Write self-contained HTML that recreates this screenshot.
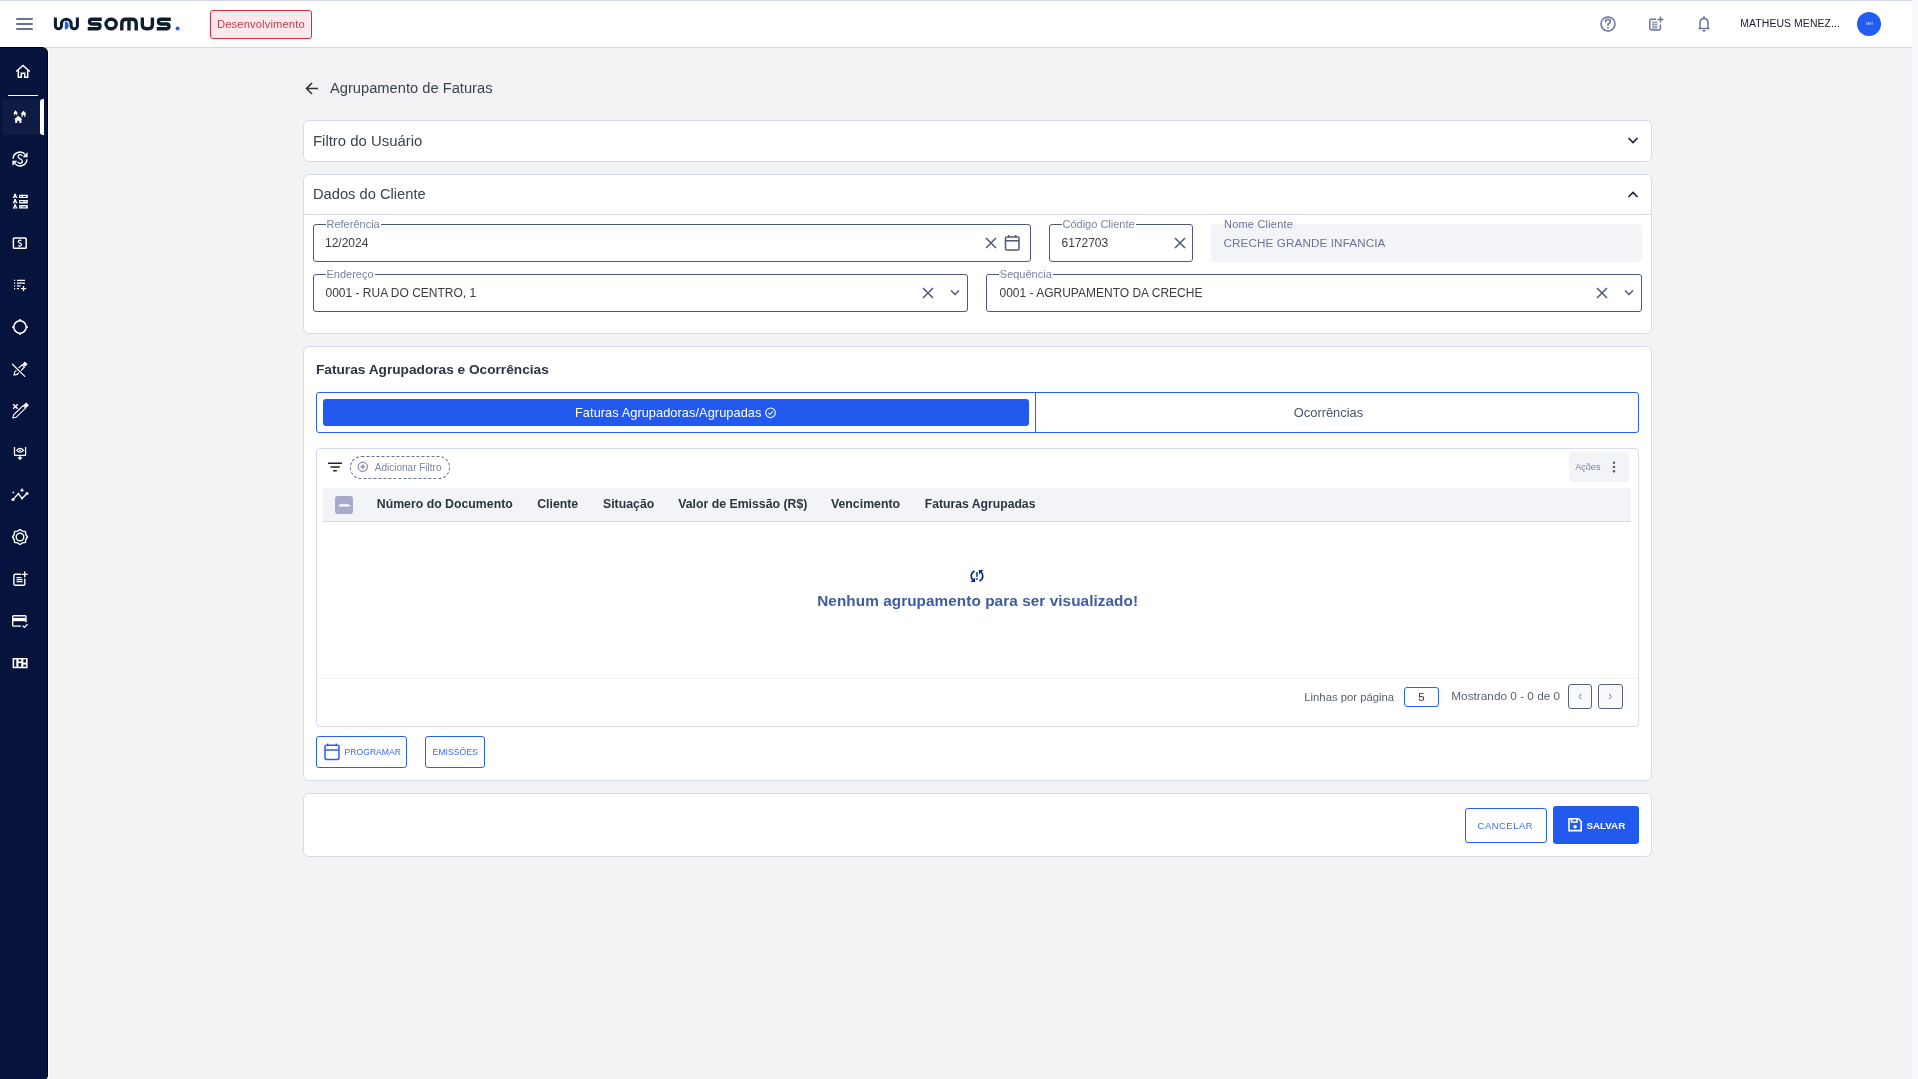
<!DOCTYPE html>
<html><head><meta charset="utf-8">
<style>
*{box-sizing:border-box;margin:0;padding:0}
html,body{width:1918px;height:1079px;overflow:hidden}
body{will-change:transform;background:#f3f3f6;font-family:"Liberation Sans",sans-serif;position:relative;color:#3a4350}
.abs{position:absolute}
svg{position:absolute;overflow:visible}
#hdr{position:absolute;left:0;top:0;width:1912px;height:48px;background:#fff;border-top:1px solid #d3d7ea;border-bottom:1px solid #d3d7ea}
#strip{position:absolute;right:0;top:0;width:6px;height:1079px;background:#f7f9fd}
#side{position:absolute;left:0;top:47px;width:48px;height:1034px;background:#06133d;border-top:1px solid #000;border-right:1px solid #000;border-top-right-radius:6px;border-bottom-right-radius:6px}
#sidegap{position:absolute;left:48px;top:48px;width:1px;height:1031px;background:#fff}
.card{position:absolute;left:303px;width:1349px;background:#fff;border:1px solid #d5daf0;border-radius:6px}
.txt{position:absolute;white-space:nowrap;line-height:1}
.inp{position:absolute;border:1px solid #4f5878;border-radius:3px;background:#fff}
.lbl{position:absolute;top:-7px;font-size:11px;color:#7a82a0;background:#fff;padding:0 1px;line-height:12px;white-space:nowrap}
.val{position:absolute;left:12px;top:12px;font-size:12px;color:#3b3b40;line-height:14px;white-space:nowrap}
</style></head>
<body>
<div id="hdr"></div>
<div id="strip"></div>
<div id="side"></div>
<div id="sidegap"></div>
<!-- hamburger -->
<div class="abs" style="left:16px;top:18px;width:17px;height:2px;background:#687196;border-radius:1px"></div>
<div class="abs" style="left:16px;top:23px;width:17px;height:2px;background:#687196;border-radius:1px"></div>
<div class="abs" style="left:16px;top:28px;width:17px;height:2px;background:#687196;border-radius:1px"></div>
<!-- logo -->
<svg style="left:0;top:0" width="1" height="1">
  <path d="M55.4 17.6V25.7A3.05 3.05 0 0 0 61.5 25.7V24A4.8 4.8 0 0 1 71.1 24V25.65A3.15 3.15 0 0 0 77.4 25.65V17.4" fill="none" stroke="#0f1d33" stroke-width="3.1"/>
  <path d="M64.8 22.6Q64.8 21.4 66.1 21.6Q68.6 22.2 68.6 25.5Q68.6 29 65.6 29.6Q64.8 29.7 64.8 28.8Z" fill="#225cf5"/>
  <g fill="none" stroke="#0f1d33" stroke-width="3.4">
    <path d="M101.8 19.3H91.6Q89.5 19.3 89.5 21.6Q89.5 24 91.6 24H97.9Q100 24 100 26.3Q100 28.7 97.9 28.7H87.7"/>
    <rect x="106" y="19.3" width="10.2" height="9.4" rx="4.7"/>
    <path d="M121.8 30.5V23.5Q121.8 19.3 126 19.3H132Q136.2 19.3 136.2 23.5V30.5M129 19.5V30.5"/>
    <path d="M142.3 17.5V24.5Q142.3 28.7 146.5 28.7H148.2Q152.4 28.7 152.4 24.5V17.5"/>
    <path d="M170.8 19.3H160.6Q158.5 19.3 158.5 21.6Q158.5 24 160.6 24H166.9Q169 24 169 26.3Q169 28.7 166.9 28.7H156.7"/>
  </g>
  <circle cx="177.6" cy="28.5" r="2" fill="#2563eb"/>
</svg>
<!-- badge -->
<div class="abs" style="left:210px;top:10px;width:102px;height:29px;border:1px solid #d0303c;border-radius:3px;background:#fde9eb"></div>
<div class="txt" style="left:217px;top:19px;font-size:11.2px;color:#c23a4b;letter-spacing:0.13px">Desenvolvimento</div>
<!-- header right icons -->
<svg style="left:0;top:0" width="1" height="1">
  <g fill="none" stroke="#6b7399" stroke-width="1.5">
    <circle cx="1608" cy="24" r="7"/>
    <path d="M1605.5 21.8Q1605.5 19.3 1608 19.3Q1610.5 19.3 1610.5 21.6Q1610.5 23.2 1608 24.3V25.6" stroke-linecap="round"/>
  </g>
  <circle cx="1608" cy="27.8" r="0.9" fill="#6b7399"/>
  <g fill="none" stroke="#6b7399" stroke-width="1.5">
    <path d="M1656 19.3H1651.2Q1649.8 19.3 1649.8 20.7V28.6Q1649.8 30 1651.2 30H1659Q1660.4 30 1660.4 28.6V24.5"/>
    <path d="M1660.5 16.5V22.5M1657.5 19.5H1663.5"/>
    <path d="M1652 22.2H1657.5M1652 24.2H1657.5M1652 26.2H1657.5M1652 28H1657.5" stroke-width="1"/>
  </g>
  <g fill="none" stroke="#6b7399" stroke-width="1.5">
    <path d="M1698.5 28.5H1709.5M1700 28.5V23Q1700 18.5 1704 18.5Q1708 18.5 1708 23V28.5" stroke-linejoin="round"/>
  </g>
  <circle cx="1704" cy="17.3" r="1" fill="#6b7399"/>
  <path d="M1702.5 30.5Q1704 32.5 1705.5 30.5Z" fill="#6b7399" stroke="#6b7399" stroke-width="0.8"/>
</svg>
<div class="txt" style="left:1740.3px;top:19.3px;font-size:10.45px;color:#1a1d2b;letter-spacing:0.08px">MATHEUS MENEZ...</div>
<div class="abs" style="left:1857px;top:12px;width:24px;height:24px;border-radius:50%;background:#225cf0"></div>
<div class="txt" style="left:1865.8px;top:21.8px;font-size:4.3px;color:#c8d4ff;letter-spacing:-0.1px">MM</div>
<!-- sidebar items -->
<div class="abs" style="left:8px;top:95px;width:30px;height:1px;background:#fff"></div>
<div class="abs" style="left:2px;top:99px;width:38px;height:36px;background:#0f1b45"></div>
<div class="abs" style="left:40px;top:99px;width:4px;height:36px;background:#fff;border-radius:3px 0 0 3px"></div>
<svg style="left:0;top:0" width="1" height="1">
  <g fill="none" stroke="#fff" stroke-width="1.5" stroke-linejoin="miter">
    <!-- home -->
    <path d="M16.2 71.5L23 65.5L29.8 71.5M18.3 70V77.3H21.3V73.2H24.7V77.3H27.7V70"/>
  </g>
  <!-- houses -->
  <g fill="#fff">
    <path d="M14.2 119.3L18.3 115.7L22.4 119.3H21.4V123H19.4V120.8H17.2V123H15.2V119.3Z"/>
    <path d="M20.6 113.8L23.5 110.8L26.4 113.8H25.6V116.8H24.3V115H22.7V116.8H21.4V113.8Z"/>
    <path d="M13.3 113.2L15.6 110.3L17.9 113.2H17.2V115.3H16.3V114H14.9V115.3H14V113.2Z"/>
  </g>
  <g fill="none" stroke="#fff" stroke-width="1.4">
    <!-- sync dollar -->
    <path d="M13.1 158.8A6.9 6.9 0 0 1 25.3 154.6"/>
    <path d="M26.9 159.2A6.9 6.9 0 0 1 14.7 163.4"/>
    <path d="M22.3 156Q21.7 154.6 20.1 154.6Q18.1 154.6 18.1 156.5Q18.1 158.2 20.1 158.8Q22.4 159.5 22.4 161.3Q22.4 163.3 20.1 163.3Q18.3 163.3 17.6 161.8" stroke-width="1.25"/>
  </g>
  <g fill="#fff">
    <path d="M27.6 152.2V157.3H22.5Z"/>
    <path d="M12.4 165.8V160.7H17.5Z"/>
  </g>
  <!-- people list -->
  <g fill="#fff">
    <path d="M12.6 198L13.8 195.8Q14.1 193.4 15.1 193.4Q16.1 193.4 16.4 195.8L17.6 198Z"/>
    <path d="M12.6 203.2L13.8 201Q14.1 198.7 15.1 198.7Q16.1 198.7 16.4 201L17.6 203.2Z"/>
    <path d="M12.6 208.4L13.8 206.2Q14.1 203.9 15.1 203.9Q16.1 203.9 16.4 206.2L17.6 208.4Z"/>
    <rect x="19.1" y="194.7" width="8.7" height="3.4" rx="0.4"/>
    <rect x="19.1" y="199.9" width="8.7" height="3.5" rx="0.4"/>
    <rect x="19.1" y="205" width="8.7" height="3.6" rx="0.4"/>
  </g>
  <g fill="#06133d">
    <rect x="20.2" y="196" width="1.4" height="0.9"/><rect x="23" y="196" width="3" height="0.9"/>
    <rect x="20.2" y="201.2" width="3.3" height="0.9"/><rect x="25" y="201.2" width="1.1" height="0.9"/>
    <rect x="20.2" y="206.4" width="1.1" height="0.9"/><rect x="22.5" y="206.4" width="3.6" height="0.9"/>
    <rect x="14.7" y="196.8" width="0.9" height="1.2"/><rect x="14.7" y="202" width="0.9" height="1.2"/><rect x="14.7" y="207.2" width="0.9" height="1.2"/>
  </g>
  <!-- money -->
  <g fill="none" stroke="#fff" stroke-width="1.5">
    <rect x="13.4" y="238" width="12.8" height="10.3" rx="0.8"/>
    <path d="M21.3 240.8Q20.8 240.3 19.8 240.3Q18.2 240.3 18.2 241.6Q18.2 242.7 19.8 243.1Q21.5 243.5 21.5 244.8Q21.5 246 19.8 246Q18.7 246 18.1 245.4M19.8 239.2V240.3M19.8 246V247.2" stroke-width="1.1"/>
  </g>
  <!-- list plus -->
  <g fill="none" stroke="#fff" stroke-width="1.25">
    <path d="M16.9 280.4H25M16.9 283.1H25M16.9 285.8H20.5M16.9 288.5H19"/>
    <path d="M14 280.4H15.2M14 283.1H15.2M14 285.8H15.2M14 288.5H15.2"/>
    <path d="M23.5 285.9V291.1M20.9 288.5H26.1"/>
  </g>
  <!-- crosshair circle -->
  <g fill="none" stroke="#fff" stroke-width="1.5">
    <circle cx="20" cy="327" r="6.2"/>
    <path d="M20 319V320.5M20 333.5V335M12 327H13.5M26.5 327H28"/>
  </g>
  <!-- pencil ruler off -->
  <g transform="translate(13.8 375.3) rotate(-44.8)">
    <path d="M0.3 0L3 -1.7H13.2V1.7H3Z" fill="none" stroke="#fff" stroke-width="1.1"/>
    <rect x="13.9" y="-1.9" width="3.6" height="3.8" fill="#fff"/>
  </g>
  <path d="M12.4 364.2L24.8 376.4" stroke="#06133d" stroke-width="3"/>
  <path d="M12.4 364.2L24.8 376.4" stroke="#fff" stroke-width="1.2" stroke-linecap="round"/>
  <!-- pencil x -->
  <g fill="none" stroke="#fff" stroke-width="1.5">
    <path d="M13.2 404.2L17.7 408.7M17.7 404.2L13.2 408.7"/>
  </g>
  <g transform="translate(12.7 418.1) rotate(-44)">
    <path d="M0.3 0L3 -1.75H16.3V1.75H3Z" fill="none" stroke="#fff" stroke-width="1.1"/>
    <rect x="17" y="-1.95" width="3.6" height="3.9" fill="#fff"/>
  </g>
  <!-- eye tray -->
  <g fill="none" stroke="#fff" stroke-width="1.2">
    <path d="M14.5 447V455.3H25.6V447"/>
    <path d="M16.8 450.3Q20.2 446.6 23.6 450.3Q20.2 454 16.8 450.3Z"/>
    <circle cx="20.2" cy="450.3" r="0.9" fill="#fff" stroke="none"/>
    <path d="M20 455.3V458"/>
  </g>
  <path d="M17.3 457.2L20 460.2L22.7 457.2Z" fill="#fff"/>
  <!-- trend sparkle -->
  <g fill="none" stroke="#fff" stroke-width="1.4" stroke-linecap="round" stroke-linejoin="round">
    <path d="M13 499.6L18.4 493.6L22 498.4L27 493.4"/>
  </g>
  <g fill="#fff">
    <circle cx="13" cy="499.6" r="1.5"/><circle cx="27" cy="493.4" r="1.5"/><circle cx="22" cy="498.4" r="1"/><circle cx="18.4" cy="493.6" r="0.9"/>
    <path d="M22 487.8L22.7 489.6L24.5 490.3L22.7 491L22 492.8L21.3 491L19.5 490.3L21.3 489.6Z"/>
    <path d="M13.3 490.9L13.7 492L14.8 492.4L13.7 492.8L13.3 493.9L12.9 492.8L11.8 492.4L12.9 492Z"/>
  </g>
  <!-- gear sun -->
  <g fill="none" stroke="#fff" stroke-width="1.4">
    <path d="M20 529.5L22.5 531.2L25.4 531.6L25.8 534.5L27.5 537L25.8 539.5L25.4 542.4L22.5 542.8L20 544.5L17.5 542.8L14.6 542.4L14.2 539.5L12.5 537L14.2 534.5L14.6 531.6L17.5 531.2Z"/>
    <circle cx="20" cy="537" r="3.8"/>
  </g>
  <!-- doc plus -->
  <g fill="none" stroke="#fff" stroke-width="1.4">
    <path d="M21 574.3H15.3Q13.9 574.3 13.9 575.7V583.9Q13.9 585.3 15.3 585.3H23.4Q24.8 585.3 24.8 583.9V578.5"/>
    <path d="M24.7 571.5V577.3M21.8 574.4H27.6"/>
    <path d="M16.5 577.6H21.5M16.5 579.6H22.5M16.5 581.6H22.5" stroke-width="1.1"/>
  </g>
  <!-- card check -->
  <g fill="none" stroke="#fff" stroke-width="1.4">
    <path d="M21 626.1H13.6Q12.7 626.1 12.7 625.2V616.6Q12.7 615.7 13.6 615.7H25.1Q26 615.7 26 616.6V622.3"/>
  </g>
  <rect x="13" y="617.9" width="12.7" height="3.3" fill="#fff"/>
  <path d="M22.6 625.6L24.4 627.4L27.6 624.2" fill="none" stroke="#fff" stroke-width="1.3"/>
  <!-- grid -->
  <rect x="12.6" y="657.9" width="15" height="10.4" rx="0.6" fill="#fff"/>
  <g fill="#06133d">
    <rect x="14.2" y="659.5" width="2.1" height="7.2"/>
    <rect x="18.4" y="659.5" width="2.8" height="1.9"/>
    <rect x="18.4" y="663.1" width="2.8" height="3.6"/>
    <rect x="23.3" y="659.3" width="2.7" height="3.2"/>
    <rect x="23.3" y="664.6" width="2.7" height="2.1"/>
  </g>
</svg>

<!-- title -->
<svg style="left:0;top:0" width="1" height="1"><path d="M318 88.5H307M312 83L306.5 88.5L312 94" fill="none" stroke="#333" stroke-width="1.6"/></svg>
<div class="txt" style="left:330px;top:81px;font-size:14.7px;color:#3a4350">Agrupamento de Faturas</div>

<!-- card1 -->
<div class="card" style="top:120px;height:42px">
  <div class="txt" style="left:9px;top:13px;font-size:14.9px">Filtro do Usuário</div>
</div>

<!-- card2 -->
<div class="card" style="top:174px;height:160px">
  <div class="txt" style="left:9px;top:12px;font-size:14.7px">Dados do Cliente</div>
  <div class="abs" style="left:0;top:39px;width:1347px;height:1px;background:#d5daf0"></div>
</div>
<svg style="left:0;top:0" width="1" height="1"><path d="M1628.5 138L1633 142.5L1637.5 138" fill="none" stroke="#1d2433" stroke-width="1.7"/><path d="M1628.5 197L1633 192.5L1637.5 197" fill="none" stroke="#1d2433" stroke-width="1.7"/></svg>
<div class="inp" style="left:313px;top:224px;width:718px;height:38px">
  <div class="lbl" style="left:11.5px">Referência</div>
  <div class="val" style="left:11px;top:10.7px">12/2024</div>
</div>
<div class="inp" style="left:1049px;top:224px;width:144px;height:38px">
  <div class="lbl" style="left:11.5px">Código Cliente</div>
  <div class="val" style="left:11.5px;top:10.7px">6172703</div>
</div>
<div class="abs" style="left:1211px;top:224px;width:431px;height:38px;background:#f3f4f8;border-radius:4px">
  <div class="lbl" style="left:12px;top:-6px;background:transparent;color:#6b7390;letter-spacing:0.2px">Nome Cliente</div>
  <div class="val" style="left:12.5px;top:11.7px;color:#6b7390;font-size:11.7px;letter-spacing:0.1px">CRECHE GRANDE INFANCIA</div>
</div>
<div class="inp" style="left:313px;top:274px;width:655px;height:38px">
  <div class="lbl" style="left:11.5px">Endereço</div>
  <div class="val" style="left:11.5px;top:10.7px">0001 - RUA DO CENTRO, 1</div>
</div>
<div class="inp" style="left:986px;top:274px;width:656px;height:38px">
  <div class="lbl" style="left:11.8px">Sequência</div>
  <div class="val" style="left:12.5px;top:10.7px">0001 - AGRUPAMENTO DA CRECHE</div>
</div>
<svg style="left:0;top:0" width="1" height="1">
  <g fill="none" stroke="#4f5878" stroke-width="1.5">
    <path d="M986 238L996 248M996 238L986 248"/>
    <path d="M1175 238L1185 248M1185 238L1175 248"/>
    <path d="M923 288L933 298M933 288L923 298"/>
    <path d="M1597 288L1607 298M1607 288L1597 298"/>
    <path d="M951 290.5L955 294.5L959 290.5"/>
    <path d="M1625 290.5L1629 294.5L1633 290.5"/>
    <rect x="1005.5" y="237" width="13.5" height="13" rx="1.3"/>
    <path d="M1005.5 240.8H1019M1008.8 235V237.5M1015.7 235V237.5"/>
  </g>
</svg>

<!-- card3 -->
<div class="card" style="top:346px;height:435px">
</div>
<div class="txt" style="left:316px;top:362.9px;font-size:13.68px;font-weight:bold;color:#2d3440">Faturas Agrupadoras e Ocorrências</div>
<!-- tabs -->
<div class="abs" style="left:316px;top:392px;width:1323px;height:41px;border:1px solid #2a5ef0;border-radius:3px;background:#fff"></div>
<div class="abs" style="left:323px;top:399px;width:706px;height:27px;background:#225af0;border-radius:3px"></div>
<div class="abs" style="left:1035px;top:392px;width:1px;height:41px;background:#2a5ef0"></div>
<div class="txt" style="left:575px;top:406.9px;font-size:12.8px;color:#fff;letter-spacing:0.05px">Faturas Agrupadoras/Agrupadas</div>
<svg style="left:0;top:0" width="1" height="1"><g fill="none" stroke="#fff" stroke-width="1.1"><circle cx="770.5" cy="412.8" r="4.8"/><path d="M768.3 412.9L769.9 414.5L772.8 411.3"/></g></svg>
<div class="txt" style="left:1293.8px;top:406.9px;font-size:12.86px;color:#4a5370">Ocorrências</div>
<!-- table box -->
<div class="abs" style="left:316px;top:448px;width:1323px;height:279px;border:1px solid #d5daf0;border-radius:4px;background:#fff"></div>
<svg style="left:0;top:0" width="1" height="1"><g stroke="#222" stroke-width="1.6"><path d="M328 463.2H342M330.5 467H339.8M333.2 470.8H336.8"/></g></svg>
<div class="abs" style="left:350px;top:456px;width:100px;height:23px;border:1px dashed #6a7090;border-radius:12px"></div>
<svg style="left:0;top:0" width="1" height="1"><g fill="none" stroke="#6a7090" stroke-width="1"><circle cx="362.8" cy="466.8" r="4.7"/><path d="M362.8 464.3V469.3M360.3 466.8H365.3"/></g></svg>
<div class="txt" style="left:374.8px;top:462.5px;font-size:10px;color:#7d83a8">Adicionar Filtro</div>
<div class="abs" style="left:1569px;top:452px;width:60px;height:30px;background:#f3f4f8;border-radius:4px"></div>
<div class="txt" style="left:1575.2px;top:463.2px;font-size:9.1px;color:#7a80a0">Ações</div>
<svg style="left:0;top:0" width="1" height="1"><g fill="#5a6080"><circle cx="1614" cy="462.8" r="1.3"/><circle cx="1614" cy="467" r="1.3"/><circle cx="1614" cy="471.2" r="1.3"/></g></svg>
<div class="abs" style="left:323px;top:488px;width:1308px;height:33px;background:#f3f4f8"></div>
<div class="abs" style="left:323px;top:521px;width:1308px;height:1px;background:#d5daf0"></div>
<div class="abs" style="left:335px;top:496px;width:18px;height:18px;background:#a5abcc;border-radius:3px"></div>
<svg style="left:0;top:0" width="1" height="1"><path d="M338 506.4L340.3 504.3H348.4L350.8 506.4Z" fill="#fff"/></svg>
<div class="txt" style="left:376.8px;top:497.5px;font-size:12.3px;font-weight:bold;color:#2d3440">Número do Documento</div>
<div class="txt" style="left:537.2px;top:497.5px;font-size:12.3px;font-weight:bold;color:#2d3440">Cliente</div>
<div class="txt" style="left:603px;top:497.5px;font-size:12.3px;font-weight:bold;color:#2d3440">Situação</div>
<div class="txt" style="left:678.2px;top:497.5px;font-size:12.3px;font-weight:bold;color:#2d3440">Valor de Emissão (R$)</div>
<div class="txt" style="left:831px;top:497.5px;font-size:12.3px;font-weight:bold;color:#2d3440">Vencimento</div>
<div class="txt" style="left:924.8px;top:497.5px;font-size:12.2px;font-weight:bold;color:#2d3440">Faturas Agrupadas</div>
<!-- empty state -->
<svg style="left:0;top:0" width="1" height="1">
  <g fill="none" stroke="#0b2a86" stroke-width="1.7">
    <path d="M974.6 570.9Q971.2 572.6 971.2 576Q971.2 578.8 973.6 580.6"/>
    <path d="M979.4 581.1Q982.8 579.4 982.8 576Q982.8 573.2 980.4 571.4"/>
  </g>
  <g fill="#0b2a86">
    <path d="M970.4 582H975.1V577.6Z"/>
    <path d="M983.6 570H978.9V574.4Z"/>
  </g>
  <g fill="#3050a0">
    <rect x="976.1" y="572.1" width="1.8" height="4.7"/>
    <rect x="976.1" y="578.2" width="1.8" height="1.7"/>
  </g>
</svg>
<div class="txt" style="left:817.2px;top:593px;font-size:15.3px;font-weight:bold;color:#3f5c9e;letter-spacing:0.075px">Nenhum agrupamento para ser visualizado!</div>
<!-- pagination -->
<div class="abs" style="left:317px;top:678px;width:1321px;height:1px;background:#eef0f6"></div>
<div class="txt" style="left:1304.3px;top:691.6px;font-size:11.3px;color:#5a6070">Linhas por página</div>
<div class="abs" style="left:1404px;top:687px;width:35px;height:20px;border:1px solid #2a5ef0;border-radius:3px;background:#fff"></div>
<div class="txt" style="left:1418.3px;top:691.6px;font-size:11.5px;color:#333">5</div>
<div class="txt" style="left:1451.3px;top:691.4px;font-size:11.8px;color:#5a6070">Mostrando 0 - 0 de 0</div>
<div class="abs" style="left:1568px;top:684px;width:24px;height:25px;border:1px solid #5a6080;border-radius:3px;background:#f7f9fd"></div>
<div class="abs" style="left:1598px;top:684px;width:25px;height:25px;border:1px solid #5a6080;border-radius:3px;background:#f7f9fd"></div>
<svg style="left:0;top:0" width="1" height="1"><g fill="none" stroke="#6a7090" stroke-width="1"><path d="M1581.3 694L1579 696.5L1581.3 699"/><path d="M1609.2 694L1611.5 696.5L1609.2 699"/></g></svg>
<!-- bottom buttons -->
<div class="abs" style="left:316px;top:736px;width:91px;height:32px;border:1px solid #2a5ef0;border-radius:3px;background:#fff"></div>
<svg style="left:0;top:0" width="1" height="1"><g fill="none" stroke="#2a5ef0" stroke-width="1.5"><rect x="325" y="745.2" width="14" height="14.4" rx="1.5"/><path d="M325 750H339M327.7 743.5V746M336.3 743.5V746"/></g></svg>
<div class="txt" style="left:344.5px;top:748px;font-size:8.6px;color:#3a6af0;letter-spacing:0.02px">PROGRAMAR</div>
<div class="abs" style="left:425px;top:736px;width:60px;height:32px;border:1px solid #2a5ef0;border-radius:3px;background:#fff"></div>
<div class="txt" style="left:432.6px;top:748px;font-size:8.6px;color:#3a6af0;letter-spacing:0.05px">EMISSÕES</div>

<!-- card4 -->
<div class="card" style="top:793px;height:64px">
</div>
<div class="abs" style="left:1465px;top:808px;width:82px;height:35px;border:1px solid #2a5ef0;border-radius:3px;background:#fff"></div>
<div class="txt" style="left:1477.6px;top:821px;font-size:9.4px;color:#3a6af0;letter-spacing:0.55px">CANCELAR</div>
<div class="abs" style="left:1553px;top:806px;width:86px;height:38px;background:#225af0;border-radius:3px"></div>
<svg style="left:0;top:0" width="1" height="1"><g fill="none" stroke="#fff" stroke-width="1.6"><path d="M1569 818.8H1578.5L1581.2 821.5V830.6H1569Z"/><path d="M1571.5 818.8V822H1577V818.8"/></g><circle cx="1575.1" cy="826.8" r="1.8" fill="#fff"/></svg>
<div class="txt" style="left:1586.4px;top:821px;font-size:9.8px;font-weight:bold;color:#fff">SALVAR</div>

</body></html>
